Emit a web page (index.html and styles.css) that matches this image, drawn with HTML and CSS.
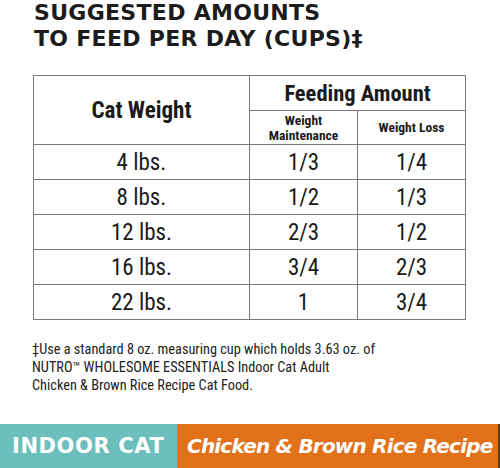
FILE: index.html
```html
<!DOCTYPE html>
<html lang="en">
<head>
    <meta charset="UTF-8">
    <title>Suggested Amounts to Feed Per Day</title>
    <link rel="stylesheet" href="styles.css">
</head>
<body>
    <div class="page">
        <h1 class="title">SUGGESTED AMOUNTS<br>TO FEED PER DAY (CUPS)‡</h1>

        <table class="feed">
            <colgroup>
                <col class="col-weight">
                <col class="col-amount">
                <col class="col-amount">
            </colgroup>
            <tr class="head-top">
                <th rowspan="2" class="big">Cat Weight</th>
                <th colspan="2" class="mid">Feeding Amount</th>
            </tr>
            <tr class="head-sub">
                <th class="small">Weight<br>Maintenance</th>
                <th class="small">Weight Loss</th>
            </tr>
            <tr><td>4 lbs.</td><td>1/3</td><td>1/4</td></tr>
            <tr><td>8 lbs.</td><td>1/2</td><td>1/3</td></tr>
            <tr><td>12 lbs.</td><td>2/3</td><td>1/2</td></tr>
            <tr><td>16 lbs.</td><td>3/4</td><td>2/3</td></tr>
            <tr><td>22 lbs.</td><td>1</td><td>3/4</td></tr>
        </table>

        <p class="note">‡Use a standard 8 oz. measuring cup which holds 3.63 oz. of<br>NUTRO™ WHOLESOME ESSENTIALS Indoor Cat Adult<br>Chicken &amp; Brown Rice Recipe Cat Food.</p>

        <div class="band">
            <div class="band-left">INDOOR CAT</div>
            <div class="band-right">Chicken &amp; Brown Rice Recipe</div>
            <div class="band-edge"></div>
        </div>
    </div>
</body>
</html>
```

FILE: styles.css
```css
body {
    margin: 0;
    background: #fff;
}
.page {
    width: 500px;
    height: 468px;
    display: flex;
    flex-direction: column;
    overflow: hidden;
}
.title {
    margin: 0;
    padding: 0 0 0 34px;
    height: 75px;
    flex-shrink: 0;
    font-family: "DejaVu Sans", sans-serif;
    font-weight: bold;
    font-size: 22px;
    line-height: 26px;
    letter-spacing: 0.3px;
    color: #1c1c1c;
}
.feed {
    margin-left: 33px;
    width: 433px;
    border-collapse: collapse;
    table-layout: fixed;
    font-family: "Liberation Sans Narrow", "Roboto Condensed", "Liberation Sans", sans-serif;
    color: #1a1a1a;
}
.col-weight {
    width: 216px;
}
.col-amount {
    width: 108px;
}
.feed th, .feed td {
    border: 1px solid #7a7a7a;
    text-align: center;
    padding: 0;
}
.feed td {
    height: 34px;
    font-size: 23px;
}
.head-top th {
    height: 34px;
}
.head-sub th {
    height: 33px;
}
.big {
    font-size: 23px;
}
.mid {
    font-size: 22.5px;
}
.small {
    font-size: 13.5px;
    line-height: 15px;
}
.note {
    margin: 20px 0 0 32px;
    font-family: "Liberation Sans Narrow", "Roboto Condensed", "Liberation Sans", sans-serif;
    font-size: 14.3px;
    line-height: 18px;
    color: #222;
}
.band {
    margin-top: auto;
    height: 44px;
    flex-shrink: 0;
    display: flex;
    font-family: "DejaVu Sans", sans-serif;
    font-weight: bold;
    color: #fff;
    white-space: nowrap;
}
.band-left {
    width: 177px;
    flex-shrink: 0;
    background: #6cbfbd;
    font-size: 21px;
    letter-spacing: 0.6px;
    line-height: 44px;
    padding-left: 12px;
    box-sizing: border-box;
}
.band-right {
    flex: 1;
    background: #e2721a;
    font-style: italic;
    font-size: 20px;
    letter-spacing: -0.8px;
    line-height: 44px;
    padding-left: 10px;
}
.band-edge {
    width: 2px;
    flex-shrink: 0;
    background: #5a3b1c;
}
```
